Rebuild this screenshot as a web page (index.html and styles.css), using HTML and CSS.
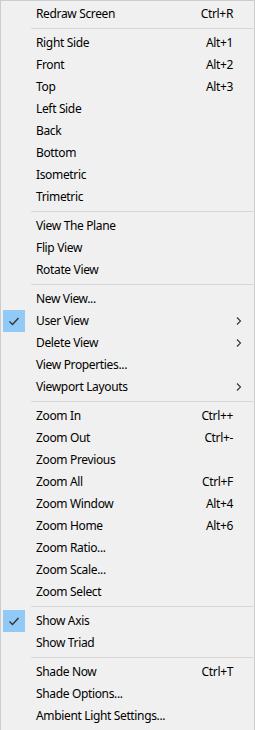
FILE: index.html
```
<!DOCTYPE html>
<html lang="en">
<head>
  <meta charset="UTF-8">
  <title>View Menu</title>
  <link rel="stylesheet" href="styles.css">
</head>
<body>
  <div class="menu">
    <div class="item"><span class="label">Redraw Screen</span><span class="key">Ctrl+R</span></div>
    <div class="sep"></div>
    <div class="item"><span class="label">Right Side</span><span class="key">Alt+1</span></div>
    <div class="item"><span class="label">Front</span><span class="key">Alt+2</span></div>
    <div class="item"><span class="label">Top</span><span class="key">Alt+3</span></div>
    <div class="item"><span class="label">Left Side</span></div>
    <div class="item"><span class="label">Back</span></div>
    <div class="item"><span class="label">Bottom</span></div>
    <div class="item"><span class="label">Isometric</span></div>
    <div class="item"><span class="label">Trimetric</span></div>
    <div class="sep"></div>
    <div class="item"><span class="label">View The Plane</span></div>
    <div class="item"><span class="label">Flip View</span></div>
    <div class="item"><span class="label">Rotate View</span></div>
    <div class="sep"></div>
    <div class="item"><span class="label">New View...</span></div>
    <div class="item checked">
      <span class="check"><svg width="22" height="22" viewBox="0 0 22 22"><path d="M6.5 11.5 L9.5 14.5 L15.5 8" fill="none" stroke="#333" stroke-width="1.4"/></svg></span>
      <span class="label">User View</span>
      <span class="arrow"><svg width="6" height="8" viewBox="0 0 6 8"><path d="M1 0.5 L4.5 4 L1 7.5" fill="none" stroke="#333" stroke-width="1.1"/></svg></span>
    </div>
    <div class="item">
      <span class="label">Delete View</span>
      <span class="arrow"><svg width="6" height="8" viewBox="0 0 6 8"><path d="M1 0.5 L4.5 4 L1 7.5" fill="none" stroke="#333" stroke-width="1.1"/></svg></span>
    </div>
    <div class="item"><span class="label">View Properties...</span></div>
    <div class="item">
      <span class="label">Viewport Layouts</span>
      <span class="arrow"><svg width="6" height="8" viewBox="0 0 6 8"><path d="M1 0.5 L4.5 4 L1 7.5" fill="none" stroke="#333" stroke-width="1.1"/></svg></span>
    </div>
    <div class="sep"></div>
    <div class="item"><span class="label">Zoom In</span><span class="key">Ctrl++</span></div>
    <div class="item"><span class="label">Zoom Out</span><span class="key">Ctrl+-</span></div>
    <div class="item"><span class="label">Zoom Previous</span></div>
    <div class="item"><span class="label">Zoom All</span><span class="key">Ctrl+F</span></div>
    <div class="item"><span class="label">Zoom Window</span><span class="key">Alt+4</span></div>
    <div class="item"><span class="label">Zoom Home</span><span class="key">Alt+6</span></div>
    <div class="item"><span class="label">Zoom Ratio...</span></div>
    <div class="item"><span class="label">Zoom Scale...</span></div>
    <div class="item"><span class="label">Zoom Select</span></div>
    <div class="sep"></div>
    <div class="item checked">
      <span class="check"><svg width="22" height="22" viewBox="0 0 22 22"><path d="M6.5 11.5 L9.5 14.5 L15.5 8" fill="none" stroke="#333" stroke-width="1.4"/></svg></span>
      <span class="label">Show Axis</span>
    </div>
    <div class="item"><span class="label">Show Triad</span></div>
    <div class="sep"></div>
    <div class="item"><span class="label">Shade Now</span><span class="key">Ctrl+T</span></div>
    <div class="item"><span class="label">Shade Options...</span></div>
    <div class="item"><span class="label">Ambient Light Settings...</span></div>
  </div>
</body>
</html>
```

FILE: styles.css
```
body {
  margin: 0;
  background: #f0f0f0;
  font-family: "Noto Sans", "Open Sans", Arial, sans-serif;
  font-size: 12px;
  letter-spacing: -0.35px;
  color: #000;
}
.menu {
  width: 253px;
  height: 726px;
  padding: 2px 0;
  background: #f0f0f0;
  border: 1px solid #cccccc;
}
.item {
  position: relative;
  display: flex;
  align-items: center;
  height: 22px;
  padding-left: 35px;
  padding-right: 21px;
  line-height: 20px;
}
.label {
  flex: 1;
  white-space: nowrap;
}
.key {
  white-space: nowrap;
}
.check {
  position: absolute;
  left: 2px;
  top: 0;
  width: 22px;
  height: 22px;
  background: #91c9f7;
}
.check svg {
  display: block;
}
.arrow {
  position: absolute;
  right: 12px;
  top: 7px;
  line-height: 0;
}
.sep {
  height: 1px;
  margin: 3px 1px 3px 30px;
  background: #d7d7d7;
}
```
